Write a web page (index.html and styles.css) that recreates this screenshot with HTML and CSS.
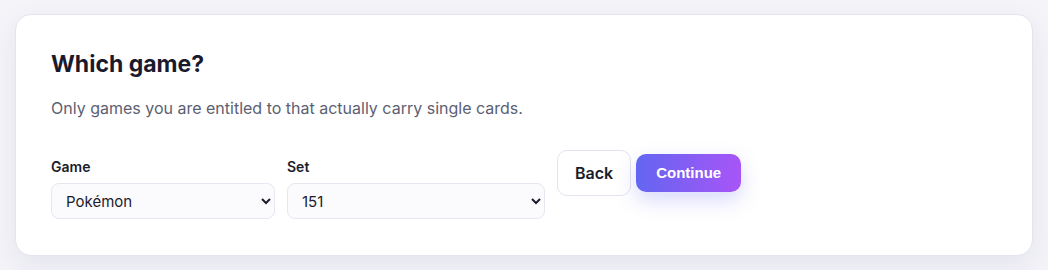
FILE: index.html
```html
<!DOCTYPE html>
<html lang="en">
<head>
  <meta charset="UTF-8">
  <meta name="viewport" content="width=device-width, initial-scale=1.0">
  <title>Which game?</title>
  <link rel="stylesheet" href="styles.css">
</head>
<body>

  <div class="card">
    <h2 class="title">Which game?</h2>
    <p class="hint">Only games you are entitled to that actually carry single cards.</p>

    <div class="row">
      <label class="field field-game">
        <span class="label">Game</span>
        <select class="select">
          <option>Pokémon</option>
          <option>Magic: The Gathering</option>
          <option>Yu-Gi-Oh!</option>
        </select>
      </label>
      <label class="field field-set">
        <span class="label">Set</span>
        <select class="select">
          <option>151</option>
          <option>Paldea Evolved</option>
          <option>Obsidian Flames</option>
        </select>
      </label>
      <div class="actions">
        <button class="btn btn-back">Back</button>
        <button class="btn-primary">Continue</button>
      </div>
    </div>
  </div>

</body>
</html>
```

FILE: styles.css
```css
body {
  font-family: Inter, "Noto Sans", sans-serif;
  margin: 0;
  padding: 14px 15px;
  background: #f4f4f9;
  color: #1b1c2b;
}

.card {
  background: #fff;
  border: 1px solid #e4e4ee;
  border-radius: 16px;
  padding: 34px 35px 36px;
  box-shadow: 0 10px 30px rgba(40, 40, 90, 0.08);
}

.title {
  margin: 0;
  font-size: 23px;
  font-weight: 700;
  line-height: 30px;
  color: #191a2c;
}

.hint {
  margin: 17px 0 0;
  font-size: 16px;
  line-height: 24px;
  color: #5c6072;
}

.row {
  display: flex;
  align-items: flex-start;
  gap: 12px;
  margin-top: 30px;
}

.field {
  display: flex;
  flex-direction: column;
  gap: 6px;
  padding-top: 7px;
}

.field-game { width: 224px; }
.field-set { width: 258px; }

.label {
  font-size: 14px;
  font-weight: 600;
  line-height: 20px;
  color: #1b1c2b;
}

.select {
  height: 36px;
  padding: 0 10px;
  font-family: Inter, "Noto Sans", sans-serif;
  font-size: 15px;
  color: #1b1c2b;
  background: #fbfbfe;
  border: 1px solid #e5e6ef;
  border-radius: 8px;
}

.actions {
  display: flex;
  align-items: center;
  gap: 5px;
}

.btn {
  font-family: Inter, "Noto Sans", sans-serif;
  font-size: 16px;
  font-weight: 600;
  line-height: 22px;
  padding: 11px 17px;
  background: #fff;
  color: #1b1c2b;
  border: 1px solid #e4e4ee;
  border-radius: 10px;
}

.btn-primary {
  font-family: "Liberation Sans", Arial, sans-serif;
  font-size: 15px;
  font-weight: 700;
  line-height: 18px;
  padding: 10px 20px;
  color: #fff;
  border: none;
  border-radius: 10px;
  background: linear-gradient(90deg, #6366f1, #a855f7);
  box-shadow: 0 8px 20px rgba(99, 102, 241, 0.25);
}
```
